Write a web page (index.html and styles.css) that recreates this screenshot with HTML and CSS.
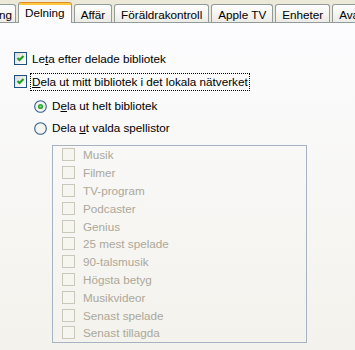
FILE: index.html
```html
<!DOCTYPE html>
<html lang="sv">
<head>
    <meta charset="UTF-8">
    <meta name="viewport" content="width=device-width, initial-scale=1.0">
    <title>Delning</title>
    <link rel="stylesheet" href="styles.css">
</head>
<body>
    <div class="window">
        <div class="tabs">
            <div class="tab first">Uppspelning</div>
            <div class="tab active">Delning</div>
            <div class="tab">Affär</div>
            <div class="tab">Föräldrakontroll</div>
            <div class="tab">Apple TV</div>
            <div class="tab">Enheter</div>
            <div class="tab">Avancerat</div>
        </div>
        <div class="panel">
            <div class="row">
                <span class="check"><svg width="11" height="11" viewBox="0 0 11 11"><polyline points="2.5,5 4.5,7 8.5,3" fill="none" stroke="#21A121" stroke-width="2.2"/></svg></span>
                <span class="label">Le<u>t</u>a efter delade bibliotek</span>
            </div>
            <div class="row">
                <span class="check"><svg width="11" height="11" viewBox="0 0 11 11"><polyline points="2.5,5 4.5,7 8.5,3" fill="none" stroke="#21A121" stroke-width="2.2"/></svg></span>
                <span class="label focus"><u>D</u>ela ut mitt bibliotek i det lokala nätverket</span>
            </div>
            <div class="row radio-row first-radio">
                <svg class="radio" width="13" height="13" viewBox="0 0 13 13"><circle cx="6.5" cy="6.5" r="5.8" fill="#F4F4F0" stroke="#2F5F8F" stroke-width="1.1"/><circle cx="6.5" cy="6.5" r="2.6" fill="#2FA82F"/><circle cx="6.5" cy="6.5" r="1" fill="#8FDC8F"/></svg>
                <span class="label">D<u>e</u>la ut helt bibliotek</span>
            </div>
            <div class="row radio-row">
                <svg class="radio" width="13" height="13" viewBox="0 0 13 13"><circle cx="6.5" cy="6.5" r="5.8" fill="#F4F4F0" stroke="#2F5F8F" stroke-width="1.1"/></svg>
                <span class="label">Dela <u>u</u>t valda spellistor</span>
            </div>

            <!-- spellistor, avstängda tills "valda" är vald -->
            <div class="list">
                <div class="item"><span class="check off"></span><span class="text">Musik</span></div>
                <div class="item"><span class="check off"></span><span class="text">Filmer</span></div>
                <div class="item"><span class="check off"></span><span class="text">TV-program</span></div>
                <div class="item"><span class="check off"></span><span class="text">Podcaster</span></div>
                <div class="item"><span class="check off"></span><span class="text">Genius</span></div>
                <div class="item"><span class="check off"></span><span class="text">25 mest spelade</span></div>
                <div class="item"><span class="check off"></span><span class="text">90-talsmusik</span></div>
                <div class="item"><span class="check off"></span><span class="text">Högsta betyg</span></div>
                <div class="item"><span class="check off"></span><span class="text">Musikvideor</span></div>
                <div class="item"><span class="check off"></span><span class="text">Senast spelade</span></div>
                <div class="item"><span class="check off"></span><span class="text">Senast tillagda</span></div>
            </div>
        </div>
    </div>
</body>
</html>
```

FILE: styles.css
```css
body {
    margin: 0;
    font-family: "Liberation Sans", Arial, sans-serif;
    font-size: 11.7px;
    color: #000;
    background-color: #ECE9D8;
}
.window {
    width: 355px;
    height: 350px;
    overflow: hidden;
    display: flex;
    flex-direction: column;
}

/* flikraden */
.tabs {
    display: flex;
    align-items: flex-end;
    gap: 2px;
    height: 22px;
    flex-shrink: 0;
    border-bottom: 1px solid #919B9C;
    background-color: #ECE9D8;
}
.tab {
    flex-shrink: 0;
    box-sizing: border-box;
    height: 18px;
    padding: 3px 6px 0;
    line-height: 14px;
    white-space: nowrap;
    border: 1px solid #919B9C;
    border-bottom: none;
    border-radius: 3px 3px 0 0;
    background: linear-gradient(#FEFEFE, #ECEBE6);
}
.tab.first {
    margin-left: -60px;
    padding-right: 3px;
}
.tab.active {
    height: 21px;
    margin-bottom: -1px;
    padding-top: 4px;
    border-top: none;
    background: linear-gradient(#E68B2C 0 1px, #FFC83C 1px 3px, #FCFCFE 3px);
}

/* innehåll */
.panel {
    flex: 1;
    padding: 24px 0 0 14px;
    background: linear-gradient(#FCFCFE, #F3F2EC);
}
.row {
    display: flex;
    align-items: center;
    height: 23px;
}
.radio-row {
    height: 22px;
    margin-left: 20px;
}
.first-radio {
    margin-top: 2px;
}
.radio {
    flex-shrink: 0;
}
.label {
    margin-left: 3px;
    padding: 0 1px;
    line-height: 16px;
    border: 1px dotted transparent;
    white-space: nowrap;
}
.label.focus {
    border-color: #000;
}
.check {
    flex-shrink: 0;
    box-sizing: border-box;
    width: 13px;
    height: 13px;
    display: flex;
    border: 1px solid #1C5180;
    background: linear-gradient(135deg, #DCDCD7, #FFFFFF);
}
.check.off {
    border-color: #CAC8BB;
    background: #F6F5F0;
}

/* spellistor */
.list {
    box-sizing: border-box;
    width: 255px;
    margin: 6px 0 0 38px;
    padding-left: 9px;
    border: 1px solid #A7B3C2;
}
.item {
    display: flex;
    align-items: center;
    height: 17.8px;
    color: #ACA899;
}
.item .text {
    margin-left: 8px;
    white-space: nowrap;
}
```
